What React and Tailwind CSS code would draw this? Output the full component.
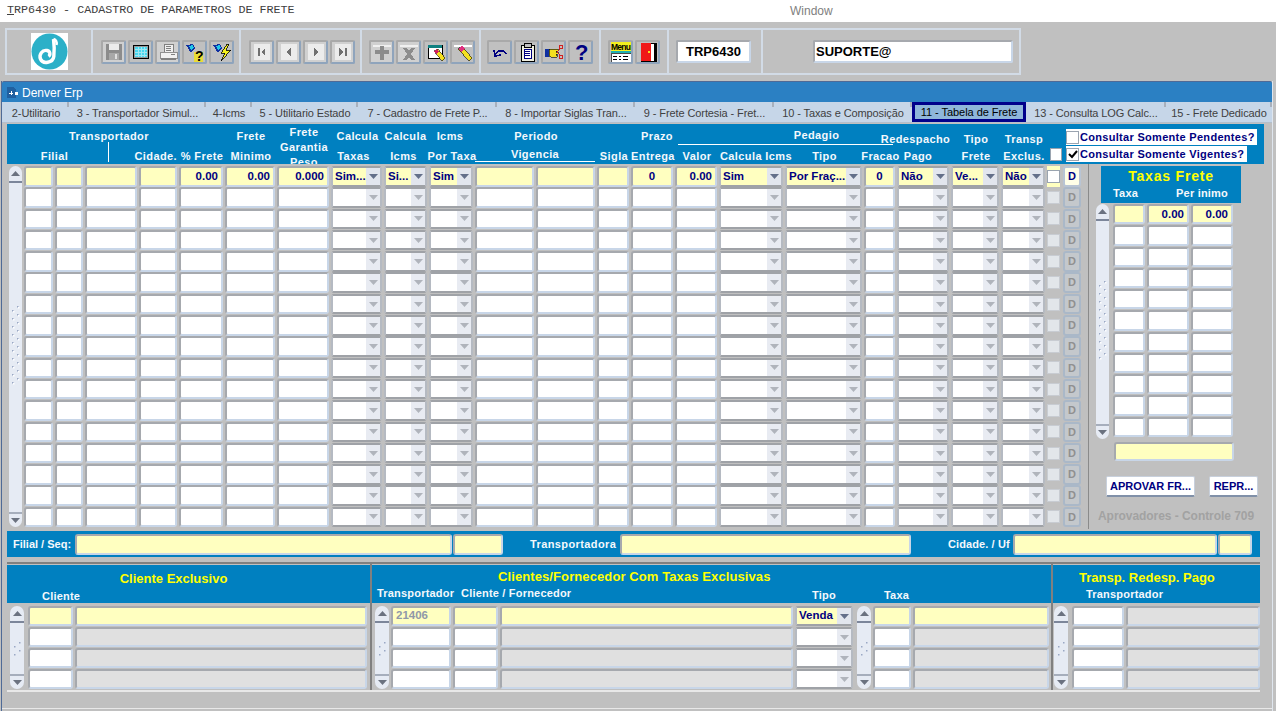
import React from "react";

const sans = "[font-family:'Liberation_Sans',Arial,sans-serif]";

// column slots of the main table, each one holds the cell plus its 2px gap
const mainGrid =
  "grid grid-cols-[31px_30px_54px_40px_46px_52px_54px_53px_45px_46px_61px_61px_34px_44px_44px_66px_79px_33px_54px_50px_46px_16px_18px]";

const firstRow = [
  { t: "text" },
  { t: "text" },
  { t: "text" },
  { t: "text" },
  { t: "text", v: "0.00" },
  { t: "text", v: "0.00" },
  { t: "text", v: "0.000" },
  { t: "select", v: "Sim..." },
  { t: "select", v: "Si..." },
  { t: "select", v: "Sim" },
  { t: "text" },
  { t: "text" },
  { t: "text" },
  { t: "text", v: "0", center: true },
  { t: "text", v: "0.00" },
  { t: "select", v: "Sim" },
  { t: "select", v: "Por Fraç..." },
  { t: "text", v: "0", center: true },
  { t: "select", v: "Não" },
  { t: "select", v: "Ve..." },
  { t: "select", v: "Não" },
];

const tabs = [
  ["2-Utilitario", "w-[66px]"],
  ["3 - Transportador Simul...", "w-[137px]"],
  ["4-Icms", "w-[46px]"],
  ["5 - Utilitario Estado", "w-[106px]"],
  ["7 - Cadastro de Frete P...", "w-[139px]"],
  ["8 - Importar Siglas Tran...", "w-[138px]"],
  ["9 - Frete Cortesia - Fret...", "w-[139px]"],
  ["10 - Taxas e Composição", "w-[138px]"],
  ["11 - Tabela de Frete", "w-[114px]", true],
  ["13 - Consulta LOG Calc...", "w-[140px]"],
  ["15 - Frete Dedicado", "w-[106px]"],
];

const Cell = ({ className = "", bg = "bg-white", value, center }) => (
  <div
    className={`h-full min-w-0 rounded-[3px] border-2 border-t-[#a6a9ae] border-l-[#a6a9ae] border-r-[#c8d6e8] border-b-[#c8d6e8] ${bg} ${className} flex items-center overflow-hidden px-[3px] text-[11.5px] font-bold text-[#000080] ${center ? "justify-center" : "justify-end"}`}
  >
    {value}
  </div>
);

const Tri = ({ up, className = "fill-[#6b7280]" }) => (
  <svg width="9" height="5" viewBox="0 0 9 5" className={className}>
    {up ? <path d="M4.5 0 9 5H0z" /> : <path d="M0 0h9L4.5 5z" />}
  </svg>
);

const Select = ({ className = "", value }) => (
  <div
    className={`h-full min-w-0 rounded-[3px] border-2 border-t-[#9fa2a7] border-l-[#b5bac2] border-r-[#b5bac2] border-b-[#9fa2a7] bg-white ${className} flex overflow-hidden`}
  >
    <div className={`flex min-w-0 flex-1 items-center overflow-hidden whitespace-nowrap pl-[2px] text-[11.5px] font-bold text-[#000080] ${value ? "bg-[#ffffc0]" : "bg-white"}`}>
      {value}
    </div>
    <div className={`flex w-[14px] shrink-0 items-center justify-center ${value ? "bg-[#e2e6ee]" : "bg-[#e8ebf2]"}`}>
      <Tri className={value ? "fill-[#64708a]" : "fill-[#b0b4bc]"} />
    </div>
  </div>
);

const Grip = () => (
  <svg width="9" height="84" viewBox="0 0 9 84">
    {[0, 1, 2, 3, 4, 5, 6, 7, 8, 9].map((i) => (
      <g key={i}>
        <rect x="6" y={i * 8} width="1.5" height="1.5" fill="#9aa8c4" />
        <rect x="1" y={i * 8 + 4} width="1.5" height="1.5" fill="#9aa8c4" />
        <rect x="7" y={i * 8 + 1} width="1.5" height="1.5" fill="#fff" />
        <rect x="2" y={i * 8 + 5} width="1.5" height="1.500" fill="#fff" />
      </g>
    ))}
  </svg>
);

const SmallGrip = () => (
  <svg width="9" height="14" viewBox="0 0 9 14" className="fill-[#9aa8c4]">
    <rect x="6" y="0" width="1.5" height="1.5" />
    <rect x="1" y="4" width="1.5" height="1.5" />
    <rect x="6" y="8" width="1.5" height="1.5" />
    <rect x="1" y="12" width="1.5" height="1.5" />
  </svg>
);

const Scroll = ({ className = "", children }) => (
  <div className={`flex flex-col rounded-[7px] bg-[#e6ebf4] ${className}`}>
    <div className="flex h-[17px] shrink-0 items-center justify-center border-b-2 border-b-[#7c869a]">
      <Tri up />
    </div>
    <div className="flex min-h-0 flex-1 items-center justify-center">{children}</div>
    <div className="flex h-[15px] shrink-0 items-center justify-center border-t-2 border-t-[#a6aebc]">
      <Tri />
    </div>
  </div>
);

const px = { shapeRendering: "crispEdges" };

const navPanel = <rect x="2" y="2" width="16" height="16" fill="#ececec" />;

const icons = {
  save: (
    <>
      <rect x="2" y="2" width="16" height="16" fill="#8c8c8c" />
      <rect x="5" y="2" width="10" height="6" fill="#ececec" />
      <rect x="5" y="11" width="10" height="7" fill="#a8a8a8" />
      <rect x="11" y="12" width="2" height="5" fill="#e0e0e0" />
    </>
  ),
  screen: (
    <>
      <rect x="2" y="3" width="16" height="14" fill="#000" />
      <rect x="3" y="4" width="14" height="12" fill="#9a9a9a" />
      <rect x="4" y="5" width="12" height="10" fill="#48d8f0" />
      <path d="M4 7h12M4 10h12M4 13h12M7 5v10M10 5v10M13 5v10" stroke="#a0e8f4" />
    </>
  ),
  print: (
    <>
      <rect x="6" y="2" width="9" height="8" fill="#f0f0f0" stroke="#808080" />
      <path d="M8 4h5M8 6h5M8 8h5" stroke="#808080" />
      <rect x="2" y="10" width="17" height="6" fill="#f0f0f0" stroke="#909090" />
      <rect x="3" y="16" width="15" height="2" fill="#808080" />
      <rect x="13" y="12" width="4" height="1" fill="#808080" />
    </>
  ),
  query: (
    <>
      <path d="M1 3 8 2l2 4-4 5z" fill="#1030a0" />
      <path d="M4 4 8 3l1 3-3 2z" fill="#20c8e8" />
      <rect x="9" y="10" width="9" height="10" fill="#f0e020" opacity=".85" />
      <text x="10" y="19" fontSize="14" fontWeight="bold" fill="#000" fontFamily="Liberation Sans">?</text>
    </>
  ),
  bolt: (
    <>
      <path d="M1 3 8 2l2 4-4 5z" fill="#1030a0" />
      <path d="M4 4 8 3l1 3-3 2z" fill="#20c8e8" />
      <path d="M15 2 9 11h4l-4 8 10-11h-5l3-6z" fill="#f4f020" stroke="#000" strokeWidth=".8" />
    </>
  ),
  first: (
    <>
      {navPanel}
      <path d="M6 6h2v8H6zM13 6v8L9 10z" fill="#707070" />
    </>
  ),
  prev: (
    <>
      {navPanel}
      <path d="M12 6v8l-5-4z" fill="#707070" />
    </>
  ),
  next: (
    <>
      {navPanel}
      <path d="M8 6v8l5-4z" fill="#707070" />
    </>
  ),
  last: (
    <>
      {navPanel}
      <path d="M6 6v8l5-4zM12 6h2v8h-2z" fill="#707070" />
    </>
  ),
  plus: (
    <>
      <rect x="1" y="3" width="18" height="2" fill="#f0f0f0" />
      <path d="M8 4h4v4h5v4h-5v6H8v-6H3V8h5z" fill="#8c8c8c" />
    </>
  ),
  del: (
    <>
      <rect x="1" y="3" width="18" height="2" fill="#f0f0f0" />
      <path d="M4 6h4l2 3 2-3h4l-4 6 4 6h-4l-2-3-2 3H4l4-6z" fill="#8c8c8c" />
    </>
  ),
  winPen: (
    <>
      <rect x="2" y="3" width="14" height="13" fill="#fff" stroke="#000" />
      <rect x="2" y="3" width="14" height="3" fill="#108080" />
      <path d="M8 9 12 7l7 9-3 3z" fill="#f4e020" stroke="#000" strokeWidth=".6" />
      <path d="M8 9l3-2 2 3-3 2z" fill="#d02060" />
    </>
  ),
  pen: (
    <>
      <rect x="1" y="3" width="18" height="2" fill="#fff" />
      <path d="M5 7l4-3 10 12-3 3z" fill="#f4e020" stroke="#000" strokeWidth=".6" />
      <path d="M5 7l4-3 3 3-4 3z" fill="#e03080" />
    </>
  ),
  undo: (
    <path d="M5 13c2-5 9-6 11-1M4 8l1 6 6-1" fill="none" stroke="#000080" strokeWidth="1.6" />
  ),
  clip: (
    <>
      <rect x="4" y="3" width="13" height="16" fill="#f0f0e0" stroke="#000" />
      <rect x="7" y="1" width="7" height="4" fill="#c0c0c0" stroke="#000" />
      <rect x="7" y="7" width="7" height="9" fill="#fff" stroke="#000080" />
      <path d="M8 9h5M8 11h5M8 13h5" stroke="#000080" />
    </>
  ),
  hand: (
    <>
      <rect x="1" y="7" width="4" height="8" fill="#1030a0" />
      <path d="M5 7h9v2h-2v1h2v2h-2v1h1v2H7l-2-1z" fill="#f4e020" stroke="#000" strokeWidth=".6" />
      <circle cx="17" cy="5" r="2" fill="none" stroke="#d02020" />
      <circle cx="17" cy="15" r="2" fill="none" stroke="#d02020" />
      <path d="M16 7l-3 3 3 3" fill="none" stroke="#d02020" />
    </>
  ),
  help: (
    <text x="4" y="18" fontSize="22" fontWeight="bold" fill="#000080" fontFamily="Liberation Sans">?</text>
  ),
  menu: (
    <>
      <rect x="0" y="0" width="20" height="9" fill="#f4f020" />
      <text x="0" y="8" fontSize="8.5" fontWeight="bold" fill="#000" fontFamily="Liberation Sans" textLength="20">Menu</text>
      <rect x="0" y="9" width="20" height="2" fill="#20b0b0" />
      <rect x="0" y="11" width="20" height="9" fill="#fff" stroke="#000" strokeWidth=".7" />
      <path d="M2 14h4M8 14h2M12 14h5M2 17h4M8 17h2M12 17h5" stroke="#000" />
    </>
  ),
  door: (
    <>
      <rect x="3" y="1" width="15" height="18" fill="#fff" stroke="#000" />
      <rect x="16" y="1" width="2" height="18" fill="#000" />
      <path d="M3 1h10v18H3z" fill="#f01818" />
      <rect x="10" y="9" width="2" height="2" fill="#f4e020" />
    </>
  ),
};

const Tool = ({ name, off, className = "" }) => (
  <div
    className={`flex h-[24px] w-[25px] shrink-0 items-center justify-center rounded-[2px] border-2 border-t-[#a9a9a9] border-l-[#a9a9a9] border-r-[#8fa4bc] border-b-[#8fa4bc] ${off ? "bg-[#d0d0d0]" : "bg-[#c0c0c0]"} ${className}`}
  >
    <svg width="20" height="20" viewBox="0 0 20 20" style={px}>
      {icons[name]}
    </svg>
  </div>
);

const Label = ({ className = "", children }) => (
  <div className={`whitespace-nowrap text-[11px] font-bold leading-[13px] tracking-[0.4px] text-[#f4f8fc] ${className}`}>
    {children}
  </div>
);

const TableHeader = () => (
  <div className="grid h-[40px] w-[1257px] grid-cols-[17px_31px_30px_54px_40px_46px_52px_54px_53px_45px_46px_61px_61px_34px_44px_44px_66px_79px_33px_54px_50px_46px_19px_1fr] grid-rows-[24px_16px] overflow-hidden bg-[#0080c0]">
    <Label className="col-start-2 col-end-6 row-start-1 self-center justify-self-center pl-[15px]">Transportador</Label>
    <Label className="col-start-7 row-start-1 self-center justify-self-center">Frete</Label>
    <div className="col-start-8 row-span-2 row-start-1 justify-self-center pt-[1px] text-center">
      <Label className="leading-[15px]">Frete</Label>
      <Label className="leading-[15px]">Garantia</Label>
      <Label className="leading-[15px]">Peso</Label>
    </div>
    <Label className="col-start-9 row-start-1 self-center justify-self-center">Calcula</Label>
    <Label className="col-start-10 row-start-1 self-center justify-self-center pr-[2px]">Calcula</Label>
    <Label className="col-start-11 row-start-1 self-center justify-self-center pr-[4px]">Icms</Label>
    <Label className="col-start-12 col-end-14 row-start-1 self-center justify-self-center">Periodo</Label>
    <Label className="col-start-15 row-start-1 self-center justify-self-center pl-[8px]">Prazo</Label>
    <Label className="col-start-16 col-end-20 row-start-1 ml-[3px] mr-[4px] h-[21px] self-start justify-self-stretch border-b border-b-white pl-[62px] pt-[5px] text-center">Pedagio</Label>
    <Label className="col-start-19 col-end-21 row-start-1 self-end justify-self-center -translate-y-[2px] pl-[16px]">Redespacho</Label>
    <Label className="col-start-21 row-start-1 self-end justify-self-center -translate-y-[2px]">Tipo</Label>
    <Label className="col-start-22 row-start-1 self-end justify-self-center -translate-y-[2px]">Transp</Label>

    <Label className="col-start-2 col-end-4 row-start-2 self-center justify-self-center">Filial</Label>
    <div className="col-start-4 row-start-2 ml-[23px] h-[20px] w-px -translate-y-[6px] bg-white" />
    <Label className="col-start-5 row-start-2 self-center justify-self-end pr-[2px]">Cidade.</Label>
    <Label className="col-start-6 row-start-2 self-center justify-self-center">% Frete</Label>
    <Label className="col-start-7 row-start-2 self-center justify-self-center">Minimo</Label>
    <Label className="col-start-9 row-start-2 self-center justify-self-center pr-[8px]">Taxas</Label>
    <Label className="col-start-10 row-start-2 self-center justify-self-center pr-[6px]">Icms</Label>
    <Label className="col-start-11 row-start-2 self-center justify-self-center">Por Taxa</Label>
    <Label className="col-start-12 col-end-14 row-start-2 mr-[2px] h-[14px] self-start justify-self-stretch border-b border-b-white text-center">Vigencia</Label>
    <Label className="col-start-14 row-start-2 self-center justify-self-center tracking-[0.1px]">Sigla</Label>
    <Label className="col-start-15 row-start-2 self-center justify-self-center tracking-[0.3px]">Entrega</Label>
    <Label className="col-start-16 row-start-2 self-center justify-self-center">Valor</Label>
    <Label className="col-start-17 row-start-2 self-center justify-self-center pl-[8px] tracking-[0.2px]">Calcula Icms</Label>
    <Label className="col-start-18 row-start-2 self-center justify-self-center">Tipo</Label>
    <Label className="col-start-19 row-start-2 self-center justify-self-center tracking-[0.2px]">Fracao</Label>
    <Label className="col-start-20 row-start-2 self-center justify-self-center pr-[12px]">Pago</Label>
    <Label className="col-start-21 row-start-2 self-center justify-self-center">Frete</Label>
    <Label className="col-start-22 row-start-2 self-center justify-self-center">Exclus.</Label>
    <div className="col-start-23 row-start-2 ml-[3px] h-[13px] w-[12px] self-start border border-[#9aa4b0] bg-white" />
    <div className="col-start-24 row-span-2 row-start-1 flex flex-col gap-[1px] whitespace-nowrap pt-[5px] text-[11px] font-bold tracking-[0.3px] text-[#000080]">
      <div className="flex h-[16px] w-[191px] items-center bg-white">
        <div className="mr-[1px] h-[13px] w-[13px] border border-[#9aa4b0] bg-white" />
        Consultar Somente Pendentes?
      </div>
      <div className="flex h-[16px] w-[181px] items-center bg-white">
        <div className="mr-[1px] flex h-[13px] w-[13px] items-center justify-center border border-[#9aa4b0] bg-white">
          <svg width="10" height="9" viewBox="0 0 10 9">
            <path d="M1 4l3 3 5-6" fill="none" stroke="#000" strokeWidth="2" />
          </svg>
        </div>
        Consultar Somente Vigentes?
      </div>
    </div>
  </div>
);

const MainRow = ({ first }) => (
  <div className={`${mainGrid} min-h-0`}>
    {firstRow.map((c, i) =>
      c.t === "select" ? (
        <Select key={i} className="mr-[2px]" value={first ? c.v : undefined} />
      ) : (
        <Cell key={i} className="mr-[2px]" bg={first ? "bg-[#ffffc0]" : "bg-white"} value={first ? c.v : undefined} center={c.center} />
      ),
    )}
    <div className={`flex h-full items-center justify-center ${first ? "bg-[#ffffc0] mr-[3px]" : "mr-[3px]"}`}>
      <div className={`h-[13px] w-[13px] border ${first ? "border-[#9aa4b0] bg-white" : "border-[#c8ccd2] bg-[#e2e6ea]"}`} />
    </div>
    <div
      className={`flex h-full w-[18px] items-center justify-center rounded-[3px] border-2 text-[11px] font-bold ${first ? "border-[#b8c4d4] bg-[#ffffe8] text-[#000080]" : "border-[#aab8c8] bg-[#c4c8cc] text-[#909090]"}`}
    >
      D
    </div>
  </div>
);

const SubRow = ({ cols, first }) => (
  <div className="flex min-h-0 gap-[2px]">
    {cols.map((c, i) =>
      c.select ? (
        <Select key={i} className={c.w} value={first ? c.v : undefined} />
      ) : (
        <Cell
          key={i}
          className={`${c.w} !justify-start !text-[#9098a8]`}
          bg={c.flat ? c.flat : first ? "bg-[#ffffc0]" : c.gray ? "bg-[#e0e0e0]" : "bg-white"}
          value={first ? c.v : undefined}
        />
      ),
    )}
  </div>
);

const SubGrid = ({ cols }) => (
  <div className="grid h-[83px] grid-rows-4 gap-y-[1px]">
    {[0, 1, 2, 3].map((r) => (
      <SubRow key={r} cols={cols} first={r === 0} />
    ))}
  </div>
);

export default function App() {
  return (
    <div className={`flex h-[711px] w-[1276px] flex-col overflow-hidden bg-[#c0c0c0] ${sans}`}>
      {/* title bar */}
      <div className="flex h-[22px] shrink-0 items-center bg-white pl-[7px]">
        <div className="w-[783px] whitespace-nowrap [font-family:'Liberation_Mono',monospace] text-[11.7px] text-[#404040]">
          <span className="underline">T</span>RP6430 - CADASTRO DE PARAMETROS DE FRETE
        </div>
        <div className="text-[12px] text-[#808080]">Window</div>
      </div>

      {/* toolbar */}
      <div className="h-[59px] shrink-0 pl-[5px] pt-[6px]">
        <div className="flex h-[47px] w-[1016px] border-2 border-[#d2dbe6]">
          <div className="flex w-[86px] items-center justify-center border-r-2 border-r-[#d2dbe6] pl-[1px]">
            <div className="h-[37px] w-[37px] bg-white">
              <svg width="37" height="37" viewBox="0 0 37 37">
                <ellipse cx="18.5" cy="18.5" rx="18" ry="18" fill="#2bb0c8" />
                <path d="M22.500 6c.8 6 .8 13 .3 17.500-.8 6.500-11 8-13.300 2.500-1.800-4.500 1.800-9.500 6.500-8.500 3.200.7 3.800 4.300 1.500 5.800" fill="none" stroke="#fff" strokeWidth="3.400" />
                <path d="M22.500 6c3 1 3.500 3.500 3 6" fill="none" stroke="#fff" strokeWidth="2.400" />
              </svg>
            </div>
          </div>
          <div className="flex w-[148px] items-center gap-[2px] border-r-2 border-r-[#d2dbe6] pl-[8px]">
            <Tool name="save" off />
            <Tool name="screen" />
            <Tool name="print" off />
            <Tool name="query" />
            <Tool name="bolt" />
          </div>
          <div className="flex w-[121px] items-center gap-[2px] border-r-2 border-r-[#d2dbe6] pl-[8px]">
            <Tool name="first" off />
            <Tool name="prev" off />
            <Tool name="next" off />
            <Tool name="last" off />
          </div>
          <div className="flex w-[119px] items-center gap-[2px] border-r-2 border-r-[#d2dbe6] pl-[7px]">
            <Tool name="plus" off />
            <Tool name="del" off />
            <Tool name="winPen" />
            <Tool name="pen" />
          </div>
          <div className="flex w-[120px] items-center gap-[2px] border-r-2 border-r-[#d2dbe6] pl-[6px]">
            <Tool name="undo" />
            <Tool name="clip" />
            <Tool name="hand" />
            <Tool name="help" />
          </div>
          <div className="flex w-[68px] items-center gap-[2px] border-r-2 border-r-[#d2dbe6] pl-[7px]">
            <Tool name="menu" />
            <Tool name="door" />
          </div>
          <div className="flex w-[94px] items-center border-r-2 border-r-[#d2dbe6] pl-[7px]">
            <div className="flex h-[23px] w-[75px] items-center justify-center rounded-[2px] border-2 border-t-[#a6a9ae] border-l-[#a6a9ae] border-r-[#c8d6e8] border-b-[#c8d6e8] bg-white text-[13px] font-bold text-black">
              TRP6430
            </div>
          </div>
          <div className="flex flex-1 items-center pl-[50px]">
            <div className="flex h-[23px] w-[200px] items-center rounded-[2px] border-2 border-t-[#a6a9ae] border-l-[#a6a9ae] border-r-[#c8d6e8] border-b-[#c8d6e8] bg-white pl-[1px] text-[13px] font-bold text-black">
              SUPORTE@
            </div>
          </div>
        </div>
      </div>

      {/* window */}
      <div className="ml-[1px] flex w-[1272px] flex-1 flex-col border-l border-r border-l-[#4f6a96] border-r-[#dfe6ee]">
        <div className="flex h-[21px] shrink-0 items-center rounded-t-[2px] border-t border-t-[#4f6a96] bg-[#2b80c3] pl-[5px] pt-[1px] text-[12px] text-white">
          <svg width="12" height="13" viewBox="0 0 12 13" className="mr-[3px]" style={px}>
            <path d="M0 1h6l3 3v8H0z" fill="#2060a0" />
            <path d="M2 7h4M4 5v4" stroke="#fff" />
            <rect x="8" y="6" width="3" height="3" fill="#fff" />
          </svg>
          Denver Erp
        </div>
        <div className="flex h-[21px] shrink-0 border-b border-b-[#b4bfcc] bg-[#c6d6e8] pl-px">
          {tabs.map(([label, w, active]) =>
            active ? (
              <div
                key={label}
                className={`flex ${w} shrink-0 items-center justify-center whitespace-nowrap border-[3px] border-[#00008b] bg-[#8fb6da] text-[11px] tracking-[-0.05px] text-black`}
              >
                {label}
              </div>
            ) : (
              <div key={label} className={`flex ${w} shrink-0 text-[#404040]`}>
                <div className="flex min-w-0 flex-1 items-center justify-center whitespace-nowrap pl-[2px] pt-[3px] text-[11px] tracking-[-0.1px]">
                  {label}
                </div>
                <div className="h-[5px] w-[2px] shrink-0 bg-[#a8b0bc]" />
              </div>
            ),
          )}
        </div>

        <div className="flex flex-1 flex-col pl-[5px]">
          <div className="pt-[1px]">
            <TableHeader />
          </div>

          {/* main table and the side panel */}
          <div className="flex h-[365px] shrink-0">
            <div className="flex w-[1082px] border-r border-r-[#8a8a8a] pl-[2px] pt-[2px]">
              <Scroll className="h-[361px] w-[13px] shrink-0">
                <Grip />
              </Scroll>
              <div className="ml-[2px] grid h-[361px] w-[1059px] grid-rows-[repeat(17,minmax(0,1fr))] gap-y-[1px]">
                {Array.from({ length: 17 }).map((_, r) => (
                  <MainRow key={r} first={r === 0} />
                ))}
              </div>
            </div>

            <div className="flex w-[170px] flex-col pt-[2px]">
              <div className="ml-[12px] h-[37px] w-[140px] bg-[#0080c0] text-center">
                <div className="pt-[2px] text-[14px] font-bold leading-[17px] tracking-[0.8px] text-[#ffff00]">Taxas Frete</div>
                <div className="flex text-[11px] font-bold tracking-[0.2px] text-[#f4f8fc]">
                  <span className="ml-[12px]">Taxa</span>
                  <span className="ml-[38px]">Per inimo</span>
                </div>
              </div>
              <div className="mt-[1px] flex pl-[7px]">
                <Scroll className="h-[235px] w-[13px] shrink-0">
                  <Grip />
                </Scroll>
                <div className="ml-[4px] grid h-[233px] w-[122px] grid-rows-[repeat(11,minmax(0,1fr))] gap-y-[1px]">
                  {Array.from({ length: 11 }).map((_, r) => (
                    <div key={r} className="grid min-h-0 grid-cols-[32px_42px_42px] gap-x-[2px]">
                      <Cell bg={r === 0 ? "bg-[#ffffc0]" : "bg-white"} />
                      <Cell bg={r === 0 ? "bg-[#ffffc0]" : "bg-white"} value={r === 0 ? "0.00" : undefined} />
                      <Cell bg={r === 0 ? "bg-[#ffffc0]" : "bg-white"} value={r === 0 ? "0.00" : undefined} />
                    </div>
                  ))}
                </div>
              </div>
              <div className="ml-[25px] mt-[3px] h-[19px] w-[120px]">
                <Cell bg="bg-[#ffffc0]" />
              </div>
              <div className="mt-[15px] flex pl-[17px]">
                <div className="flex h-[21px] w-[89px] items-center justify-center rounded-[2px] border border-b-2 border-[#c8d0dc] border-b-[#8090a8] bg-white text-[11px] font-bold text-[#000080]">
                  APROVAR FR...
                </div>
                <div className="ml-[14px] flex h-[21px] w-[49px] items-center justify-center rounded-[2px] border border-b-2 border-[#c8d0dc] border-b-[#8090a8] bg-white text-[11px] font-bold text-[#000080]">
                  REPR...
                </div>
              </div>
              <div className="mt-[10px] whitespace-nowrap pl-[9px] text-[12px] font-bold tracking-[-0.05px] text-[#a2a2a2]">
                Aprovadores - Controle 709
              </div>
            </div>
          </div>

          {/* filter bar */}
          <div className="mt-[2px] flex h-[26px] w-[1253px] shrink-0 items-center bg-[#0080c0] text-[11px] font-bold text-[#f4f8fc]">
            <span className="w-[68px] pl-[6px]">Filial / Seq:</span>
            <div className="flex h-[21px] gap-[1px]">
              <Cell className="w-[377px]" bg="bg-[#ffffc0]" />
              <Cell className="w-[50px]" bg="bg-[#ffffc0]" />
            </div>
            <span className="ml-[27px] w-[90px] whitespace-nowrap tracking-[0.4px]">Transportadora</span>
            <div className="h-[21px]">
              <Cell className="w-[291px]" bg="bg-[#ffffc0]" />
            </div>
            <span className="ml-[37px] w-[65px] whitespace-nowrap tracking-[0.1px]">Cidade. / Uf</span>
            <div className="flex h-[21px] gap-[1px]">
              <Cell className="w-[204px]" bg="bg-[#ffffc0]" />
              <Cell className="w-[34px]" bg="bg-[#ffffc0]" />
            </div>
          </div>

          {/* lower detail blocks */}
          <div className="mt-[5px] flex h-[130px] w-[1253px] shrink-0 border-t-2 border-b-2 border-t-[#808080] border-b-[#e8e8e8]">
            <div className="w-[365px] border-r-2 border-r-[#808080] pt-[1px]">
              <div className="h-[38px] bg-[#0080c0] text-center">
                <div className="pr-[30px] pt-[6px] text-[13px] font-bold leading-[16px] text-[#ffff00]">Cliente Exclusivo</div>
                <div className="pl-[35px] pt-[1px] text-left text-[11px] font-bold tracking-[0.2px] text-[#f4f8fc]">Cliente</div>
              </div>
              <div className="mt-[3px] flex pl-[3px]">
                <Scroll className="h-[83px] w-[14px] shrink-0">
                  <SmallGrip />
                </Scroll>
                <div className="ml-[4px]">
                  <SubGrid cols={[{ w: "w-[45px]" }, { w: "w-[292px]", gray: true }]} />
                </div>
              </div>
            </div>

            <div className="w-[681px] border-r-2 border-r-[#808080] pt-[1px]">
              <div className="h-[38px] bg-[#0080c0]">
                <div className="pl-[126px] pt-[4px] text-[13px] font-bold leading-[16px] tracking-[0.1px] text-[#ffff00]">
                  Clientes/Fornecedor Com Taxas Exclusivas
                </div>
                <div className="flex text-[11px] font-bold tracking-[0.2px] text-[#f4f8fc]">
                  <span className="ml-[5px] w-[84px] whitespace-nowrap">Transportador</span>
                  <span className="w-[330px] whitespace-nowrap">Cliente / Fornecedor</span>
                  <span className="ml-[21px] mt-[2px] w-[72px]">Tipo</span>
                  <span className="mt-[2px]">Taxa</span>
                </div>
              </div>
              <div className="mt-[3px] flex pl-[3px]">
                <Scroll className="h-[83px] w-[14px] shrink-0">
                  <SmallGrip />
                </Scroll>
                <div className="ml-[2px]">
                  <SubGrid
                    cols={[
                      { w: "w-[60px]", v: "21406" },
                      { w: "w-[45px]" },
                      { w: "w-[293px]", gray: true },
                      { w: "w-[58px]", select: true, v: "Venda" },
                    ]}
                  />
                </div>
                <Scroll className="ml-[4px] h-[83px] w-[14px] shrink-0">
                  <SmallGrip />
                </Scroll>
                <div className="ml-[2px]">
                  <SubGrid cols={[{ w: "w-[38px]" }, { w: "w-[136px]", gray: true }]} />
                </div>
              </div>
            </div>

            <div className="flex-1 pt-[1px]">
              <div className="h-[38px] bg-[#0080c0]">
                <div className="pl-[26px] pt-[5px] text-[13px] font-bold leading-[16px] text-[#ffff00]">Transp. Redesp. Pago</div>
                <div className="pl-[33px] text-[11px] font-bold tracking-[0.2px] text-[#f4f8fc]">Transportador</div>
              </div>
              <div className="mt-[3px] flex pl-[1px]">
                <Scroll className="h-[83px] w-[14px] shrink-0">
                  <SmallGrip />
                </Scroll>
                <div className="ml-[4px]">
                  <SubGrid cols={[{ w: "w-[52px]", flat: "bg-white" }, { w: "w-[134px]", flat: "bg-[#e0e0e0]" }]} />
                </div>
              </div>
            </div>
          </div>
        </div>
        <div className="h-[3px] shrink-0 border-t border-t-[#e8e8e8]" />
      </div>
    </div>
  );
}
